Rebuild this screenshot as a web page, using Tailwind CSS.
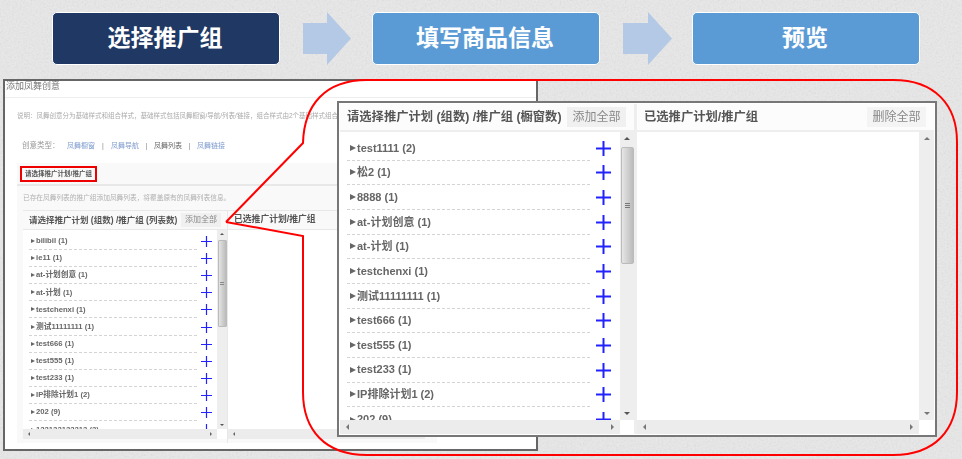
<!DOCTYPE html>
<html lang="zh">
<head>
<meta charset="utf-8">
<script src="https://cdn.jsdelivr.net/npm/@tailwindcss/browser@4"></script>
</head>
<body class="m-0">
<div class="relative w-[962px] h-[459px] overflow-hidden bg-[#e9e9e9] pt-3 font-['Liberation_Sans','Noto_Sans_CJK_SC',sans-serif]">
  <svg class="absolute inset-0 w-full h-full opacity-20" width="962" height="459"><filter id="n"><feTurbulence type="fractalNoise" baseFrequency="0.55" numOctaves="3" seed="4"/><feColorMatrix type="saturate" values="0"/></filter><rect width="962" height="459" filter="url(#n)"/></svg>

  <div class="relative flex items-stretch h-[53px] pl-[52px]">
    <div class="w-[228px] rounded-[5px] border border-white bg-[#1f3864] flex items-center justify-center text-white font-bold text-[23px] pr-[2px]">选择推广组</div>
    <div class="w-[92px] flex items-center pl-[23px]"><svg width="48" height="53" viewBox="0 0 48 53"><path d="M0 11H24V0L48 26.500L24 53V42H0Z" fill="#b4c9e6"/></svg></div>
    <div class="w-[228px] rounded-[5px] border border-white bg-[#5b9bd5] flex items-center justify-center text-white font-bold text-[23px] pr-[2px]">填写商品信息</div>
    <div class="w-[92px] flex items-center pl-[23px]"><svg width="49" height="53" viewBox="0 0 49 53"><path d="M0 11H25V0L49 26.500L25 53V42H0Z" fill="#b4c9e6"/></svg></div>
    <div class="w-[228px] rounded-[5px] border border-white bg-[#5b9bd5] flex items-center justify-center text-white font-bold text-[23px] pr-[2px]">预览</div>
  </div>

  <!-- small screenshot -->
  <div class="relative mt-[14px] ml-[3px] w-[535px] h-[372px] border-2 border-[#666] bg-white flex flex-col overflow-hidden blur-[0.3px]">
    <div class="h-[17px] border-b border-[#eee] pl-px text-[9px] leading-[11px] text-[#777] whitespace-nowrap">添加凤舞创意</div>
    <div class="pl-3 mt-[12px] text-[6.500px] leading-[12px] text-[#aaa] whitespace-nowrap">说明：凤舞创意分为基础样式和组合样式，基础样式包括凤舞橱窗/导航/列表/链接，组合样式由2个基础样式组合而成。</div>
    <div class="pl-[17px] mt-[18px] h-[12px] flex items-center text-[7px] leading-[12px] text-[#7f9ccf] whitespace-nowrap">
      <span class="text-[#999] w-[45px] text-[7.500px]">创意类型：</span><span>凤舞橱窗</span><span class="w-[16px] text-center text-[#888]">|</span><span>凤舞导航</span><span class="w-[15px] text-center text-[#888]">|</span><span class="text-[#666]">凤舞列表</span><span class="w-[15px] text-center text-[#888]">|</span><span>凤舞链接</span>
    </div>
    <div class="mt-[11px] ml-3 w-[420px] flex-1 bg-[#f9f9f9] flex flex-col mb-[6px]">
      <div class="h-[23px] border-b-2 border-[#e8e8e8] flex items-center pl-[3px]">
        <span class="h-[16px] w-[77px] border-2 border-[#e00] flex items-center justify-center text-[6.500px] font-bold text-[#555] whitespace-nowrap">请选择推广计划/推广组</span>
      </div>
      <div class="pl-[6px] mt-[6px] text-[6.700px] leading-[12px] text-[#b0b0b0] whitespace-nowrap">已存在凤舞列表的推广组添加凤舞列表，将覆盖原有的凤舞列表信息。</div>
      <div class="ml-[6px] mt-[6px] w-[402px] flex-1 border-t border-[#e8e8e8] flex">
        <div class="w-[205px] flex flex-col border-r border-[#e8e8e8]">
          <div class="h-[19px] flex items-center border-b border-[#e8e8e8] pl-[6px] pr-[6px] justify-between">
            <span class="text-[8.500px] font-bold text-[#555] whitespace-nowrap">请选择推广计划 (组数) /推广组 (列表数)</span>
            <span class="w-[40px] h-[14px] bg-[#f0f0f0] text-[8px] leading-[14px] text-center text-[#888] whitespace-nowrap shrink-0">添加全部</span>
          </div>
          <div class="h-[209px] flex flex-col bg-white">
            <div class="flex-1 flex min-h-0">
              <div class="flex-1 overflow-hidden pt-[3px] text-[7.700px] font-bold text-[#666]">
                <div class="flex items-center h-[17.100px]"><div class="w-[168px] ml-[6px] h-full border-b border-dashed border-[#d4d4d4] flex items-center gap-[1px] pl-[2px]"><i class="border-y-[2.500px] border-l-[4px] border-y-transparent border-l-[#666]"></i>bilibil (1)</div><svg class="ml-[4px]" width="11" height="11" viewBox="0 0 11 11"><path d="M0 5.500H11M5.500 0V11" stroke="#2222ff" stroke-width="1.200"/></svg></div>
                <div class="flex items-center h-[17.100px]"><div class="w-[168px] ml-[6px] h-full border-b border-dashed border-[#d4d4d4] flex items-center gap-[1px] pl-[2px]"><i class="border-y-[2.500px] border-l-[4px] border-y-transparent border-l-[#666]"></i>ie11 (1)</div><svg class="ml-[4px]" width="11" height="11" viewBox="0 0 11 11"><path d="M0 5.500H11M5.500 0V11" stroke="#2222ff" stroke-width="1.200"/></svg></div>
                <div class="flex items-center h-[17.100px]"><div class="w-[168px] ml-[6px] h-full border-b border-dashed border-[#d4d4d4] flex items-center gap-[1px] pl-[2px]"><i class="border-y-[2.500px] border-l-[4px] border-y-transparent border-l-[#666]"></i>at-计划创意 (1)</div><svg class="ml-[4px]" width="11" height="11" viewBox="0 0 11 11"><path d="M0 5.500H11M5.500 0V11" stroke="#2222ff" stroke-width="1.200"/></svg></div>
                <div class="flex items-center h-[17.100px]"><div class="w-[168px] ml-[6px] h-full border-b border-dashed border-[#d4d4d4] flex items-center gap-[1px] pl-[2px]"><i class="border-y-[2.500px] border-l-[4px] border-y-transparent border-l-[#666]"></i>at-计划 (1)</div><svg class="ml-[4px]" width="11" height="11" viewBox="0 0 11 11"><path d="M0 5.500H11M5.500 0V11" stroke="#2222ff" stroke-width="1.200"/></svg></div>
                <div class="flex items-center h-[17.100px]"><div class="w-[168px] ml-[6px] h-full border-b border-dashed border-[#d4d4d4] flex items-center gap-[1px] pl-[2px]"><i class="border-y-[2.500px] border-l-[4px] border-y-transparent border-l-[#666]"></i>testchenxi (1)</div><svg class="ml-[4px]" width="11" height="11" viewBox="0 0 11 11"><path d="M0 5.500H11M5.500 0V11" stroke="#2222ff" stroke-width="1.200"/></svg></div>
                <div class="flex items-center h-[17.100px]"><div class="w-[168px] ml-[6px] h-full border-b border-dashed border-[#d4d4d4] flex items-center gap-[1px] pl-[2px]"><i class="border-y-[2.500px] border-l-[4px] border-y-transparent border-l-[#666]"></i>测试11111111 (1)</div><svg class="ml-[4px]" width="11" height="11" viewBox="0 0 11 11"><path d="M0 5.500H11M5.500 0V11" stroke="#2222ff" stroke-width="1.200"/></svg></div>
                <div class="flex items-center h-[17.100px]"><div class="w-[168px] ml-[6px] h-full border-b border-dashed border-[#d4d4d4] flex items-center gap-[1px] pl-[2px]"><i class="border-y-[2.500px] border-l-[4px] border-y-transparent border-l-[#666]"></i>test666 (1)</div><svg class="ml-[4px]" width="11" height="11" viewBox="0 0 11 11"><path d="M0 5.500H11M5.500 0V11" stroke="#2222ff" stroke-width="1.200"/></svg></div>
                <div class="flex items-center h-[17.100px]"><div class="w-[168px] ml-[6px] h-full border-b border-dashed border-[#d4d4d4] flex items-center gap-[1px] pl-[2px]"><i class="border-y-[2.500px] border-l-[4px] border-y-transparent border-l-[#666]"></i>test555 (1)</div><svg class="ml-[4px]" width="11" height="11" viewBox="0 0 11 11"><path d="M0 5.500H11M5.500 0V11" stroke="#2222ff" stroke-width="1.200"/></svg></div>
                <div class="flex items-center h-[17.100px]"><div class="w-[168px] ml-[6px] h-full border-b border-dashed border-[#d4d4d4] flex items-center gap-[1px] pl-[2px]"><i class="border-y-[2.500px] border-l-[4px] border-y-transparent border-l-[#666]"></i>test233 (1)</div><svg class="ml-[4px]" width="11" height="11" viewBox="0 0 11 11"><path d="M0 5.500H11M5.500 0V11" stroke="#2222ff" stroke-width="1.200"/></svg></div>
                <div class="flex items-center h-[17.100px]"><div class="w-[168px] ml-[6px] h-full border-b border-dashed border-[#d4d4d4] flex items-center gap-[1px] pl-[2px]"><i class="border-y-[2.500px] border-l-[4px] border-y-transparent border-l-[#666]"></i>IP排除计划1 (2)</div><svg class="ml-[4px]" width="11" height="11" viewBox="0 0 11 11"><path d="M0 5.500H11M5.500 0V11" stroke="#2222ff" stroke-width="1.200"/></svg></div>
                <div class="flex items-center h-[17.100px]"><div class="w-[168px] ml-[6px] h-full border-b border-dashed border-[#d4d4d4] flex items-center gap-[1px] pl-[2px]"><i class="border-y-[2.500px] border-l-[4px] border-y-transparent border-l-[#666]"></i>202 (9)</div><svg class="ml-[4px]" width="11" height="11" viewBox="0 0 11 11"><path d="M0 5.500H11M5.500 0V11" stroke="#2222ff" stroke-width="1.200"/></svg></div>
                <div class="flex items-center h-[17.100px]"><div class="w-[168px] ml-[6px] h-full flex items-center gap-[1px] pl-[2px]"><i class="border-y-[2.500px] border-l-[4px] border-y-transparent border-l-[#666]"></i>123123123213 (2)</div><svg class="ml-[4px]" width="11" height="11" viewBox="0 0 11 11"><path d="M0 5.500H11M5.500 0V11" stroke="#2222ff" stroke-width="1.200"/></svg></div>
              </div>
              <div class="w-[10px] bg-[#eee] flex flex-col items-center relative">
                <i class="mt-[3px] border-x-[2px] border-b-[2px] border-x-transparent border-b-[#555]"></i>
                <div class="mt-[5px] w-[9px] h-[87px] bg-linear-to-r from-[#e4e4e4] to-[#bbb] border border-[#bbb] rounded-[1px] flex flex-col items-center justify-center gap-px"><i class="w-[4px] h-px bg-[#888]"></i><i class="w-[4px] h-px bg-[#888]"></i></div>
                <i class="mt-auto mb-[3px] border-x-[2px] border-t-[2px] border-x-transparent border-t-[#555]"></i>
              </div>
            </div>
            <div class="h-[10px] flex">
              <div class="flex-1 bg-[#ececec] flex items-center justify-between px-[5px]"><i class="border-y-[2px] border-r-[2px] border-y-transparent border-r-[#666]"></i><i class="border-y-[2px] border-l-[2px] border-y-transparent border-l-[#666]"></i></div>
              <div class="w-[10px]"></div>
            </div>
          </div>
        </div>
        <div class="flex-1 flex flex-col">
          <div class="h-[19px] border-b border-[#e8e8e8] pl-[6px] flex items-center text-[8.800px] font-bold text-[#555] whitespace-nowrap">已选推广计划/推广组</div>
          <div class="h-[199px] bg-white"></div>
          <div class="h-[10px] bg-[#ececec] flex items-center pl-[5px]"><i class="border-y-[2px] border-r-[2px] border-y-transparent border-r-[#666]"></i></div>
        </div>
      </div>
    </div>
  </div>

  <!-- enlarged callout -->
  <div class="absolute left-[337px] top-[101px] w-[600px] h-[336px] border-2 border-[#777] bg-white flex p-px blur-[0.3px]">
    <div class="w-[297px] shrink-0 flex flex-col border-r-[3px] border-[#eee]">
      <div class="h-[28px] shrink-0 bg-[#fcfcfc] border-b-2 border-[#eee] flex items-center justify-between pl-[7px] pr-[8px]">
        <span class="text-[12.300px] font-bold text-[#555] whitespace-nowrap">请选择推广计划 (组数) /推广组 (橱窗数)</span>
        <span class="w-[59px] h-[20px] shrink-0 bg-[#f0f0f0] text-[12px] leading-[20px] text-center text-[#888] whitespace-nowrap">添加全部</span>
      </div>
      <div class="flex-1 flex min-h-0">
        <div class="flex-1 overflow-hidden pt-[4px] text-[11px] font-bold text-[#666]">
          <div class="flex items-center h-[24.670px]"><div class="w-[243px] ml-[7px] h-full border-b border-dashed border-[#d4d4d4] flex items-center gap-[1px] pl-[3px]"><i class="border-y-[3.500px] border-l-[6px] border-y-transparent border-l-[#666]"></i>test1111 (2)</div><svg class="ml-[6px]" width="15" height="15" viewBox="0 0 15 15"><path d="M0 7.500H15M7.500 0V15" stroke="#2222ff" stroke-width="2"/></svg></div>
          <div class="flex items-center h-[24.670px]"><div class="w-[243px] ml-[7px] h-full border-b border-dashed border-[#d4d4d4] flex items-center gap-[1px] pl-[3px]"><i class="border-y-[3.500px] border-l-[6px] border-y-transparent border-l-[#666]"></i>松2 (1)</div><svg class="ml-[6px]" width="15" height="15" viewBox="0 0 15 15"><path d="M0 7.500H15M7.500 0V15" stroke="#2222ff" stroke-width="2"/></svg></div>
          <div class="flex items-center h-[24.670px]"><div class="w-[243px] ml-[7px] h-full border-b border-dashed border-[#d4d4d4] flex items-center gap-[1px] pl-[3px]"><i class="border-y-[3.500px] border-l-[6px] border-y-transparent border-l-[#666]"></i>8888 (1)</div><svg class="ml-[6px]" width="15" height="15" viewBox="0 0 15 15"><path d="M0 7.500H15M7.500 0V15" stroke="#2222ff" stroke-width="2"/></svg></div>
          <div class="flex items-center h-[24.670px]"><div class="w-[243px] ml-[7px] h-full border-b border-dashed border-[#d4d4d4] flex items-center gap-[1px] pl-[3px]"><i class="border-y-[3.500px] border-l-[6px] border-y-transparent border-l-[#666]"></i>at-计划创意 (1)</div><svg class="ml-[6px]" width="15" height="15" viewBox="0 0 15 15"><path d="M0 7.500H15M7.500 0V15" stroke="#2222ff" stroke-width="2"/></svg></div>
          <div class="flex items-center h-[24.670px]"><div class="w-[243px] ml-[7px] h-full border-b border-dashed border-[#d4d4d4] flex items-center gap-[1px] pl-[3px]"><i class="border-y-[3.500px] border-l-[6px] border-y-transparent border-l-[#666]"></i>at-计划 (1)</div><svg class="ml-[6px]" width="15" height="15" viewBox="0 0 15 15"><path d="M0 7.500H15M7.500 0V15" stroke="#2222ff" stroke-width="2"/></svg></div>
          <div class="flex items-center h-[24.670px]"><div class="w-[243px] ml-[7px] h-full border-b border-dashed border-[#d4d4d4] flex items-center gap-[1px] pl-[3px]"><i class="border-y-[3.500px] border-l-[6px] border-y-transparent border-l-[#666]"></i>testchenxi (1)</div><svg class="ml-[6px]" width="15" height="15" viewBox="0 0 15 15"><path d="M0 7.500H15M7.500 0V15" stroke="#2222ff" stroke-width="2"/></svg></div>
          <div class="flex items-center h-[24.670px]"><div class="w-[243px] ml-[7px] h-full border-b border-dashed border-[#d4d4d4] flex items-center gap-[1px] pl-[3px]"><i class="border-y-[3.500px] border-l-[6px] border-y-transparent border-l-[#666]"></i>测试11111111 (1)</div><svg class="ml-[6px]" width="15" height="15" viewBox="0 0 15 15"><path d="M0 7.500H15M7.500 0V15" stroke="#2222ff" stroke-width="2"/></svg></div>
          <div class="flex items-center h-[24.670px]"><div class="w-[243px] ml-[7px] h-full border-b border-dashed border-[#d4d4d4] flex items-center gap-[1px] pl-[3px]"><i class="border-y-[3.500px] border-l-[6px] border-y-transparent border-l-[#666]"></i>test666 (1)</div><svg class="ml-[6px]" width="15" height="15" viewBox="0 0 15 15"><path d="M0 7.500H15M7.500 0V15" stroke="#2222ff" stroke-width="2"/></svg></div>
          <div class="flex items-center h-[24.670px]"><div class="w-[243px] ml-[7px] h-full border-b border-dashed border-[#d4d4d4] flex items-center gap-[1px] pl-[3px]"><i class="border-y-[3.500px] border-l-[6px] border-y-transparent border-l-[#666]"></i>test555 (1)</div><svg class="ml-[6px]" width="15" height="15" viewBox="0 0 15 15"><path d="M0 7.500H15M7.500 0V15" stroke="#2222ff" stroke-width="2"/></svg></div>
          <div class="flex items-center h-[24.670px]"><div class="w-[243px] ml-[7px] h-full border-b border-dashed border-[#d4d4d4] flex items-center gap-[1px] pl-[3px]"><i class="border-y-[3.500px] border-l-[6px] border-y-transparent border-l-[#666]"></i>test233 (1)</div><svg class="ml-[6px]" width="15" height="15" viewBox="0 0 15 15"><path d="M0 7.500H15M7.500 0V15" stroke="#2222ff" stroke-width="2"/></svg></div>
          <div class="flex items-center h-[24.670px]"><div class="w-[243px] ml-[7px] h-full border-b border-dashed border-[#d4d4d4] flex items-center gap-[1px] pl-[3px]"><i class="border-y-[3.500px] border-l-[6px] border-y-transparent border-l-[#666]"></i>IP排除计划1 (2)</div><svg class="ml-[6px]" width="15" height="15" viewBox="0 0 15 15"><path d="M0 7.500H15M7.500 0V15" stroke="#2222ff" stroke-width="2"/></svg></div>
          <div class="flex items-center h-[24.670px]"><div class="w-[243px] ml-[7px] h-full flex items-center gap-[1px] pl-[3px]"><i class="border-y-[3.500px] border-l-[6px] border-y-transparent border-l-[#666]"></i>202 (9)</div><svg class="ml-[6px]" width="15" height="15" viewBox="0 0 15 15"><path d="M0 7.500H15M7.500 0V15" stroke="#2222ff" stroke-width="2"/></svg></div>
        </div>
        <div class="w-[14px] shrink-0 flex flex-col">
          <div class="flex-1 bg-[#eee] flex flex-col items-center relative">
            <i class="mt-[5px] border-x-[3px] border-b-[3px] border-x-transparent border-b-[#555]"></i>
            <div class="mt-[7px] w-[13px] h-[117px] bg-linear-to-r from-[#e6e6e6] to-[#bbb] border border-[#bbb] rounded-[2px] flex flex-col items-center justify-center gap-px">
              <i class="w-[5px] h-px bg-[#777]"></i><i class="w-[5px] h-px bg-[#777]"></i><i class="w-[5px] h-px bg-[#777]"></i>
            </div>
            <i class="mt-auto mb-[5px] border-x-[3px] border-t-[3px] border-x-transparent border-t-[#555]"></i>
          </div>
          <div class="h-[14px] bg-white"></div>
        </div>
      </div>
      <div class="h-0 relative"><div class="absolute left-0 bottom-0 w-[280px] h-[14px] bg-[#ececec] flex items-center justify-between px-[6px]"><i class="border-y-[3px] border-r-[3px] border-y-transparent border-r-[#777]"></i><i class="border-y-[3px] border-l-[3px] border-y-transparent border-l-[#777]"></i></div></div>
    </div>
    <div class="flex-1 flex flex-col">
      <div class="h-[28px] shrink-0 bg-[#fcfcfc] border-b-2 border-[#eee] flex items-center justify-between pl-[7px] pr-[8px]">
        <span class="text-[12.300px] font-bold text-[#555] whitespace-nowrap">已选推广计划/推广组</span>
        <span class="w-[59px] h-[20px] shrink-0 bg-[#f4f4f4] text-[12px] leading-[20px] text-center text-[#888] whitespace-nowrap">删除全部</span>
      </div>
      <div class="flex-1 flex min-h-0">
        <div class="flex-1 bg-white"></div>
        <div class="w-[15px] bg-[#eee] flex flex-col items-center">
          <i class="mt-[5px] border-x-[3px] border-b-[3px] border-x-transparent border-b-[#777]"></i>
          <i class="mt-auto mb-[5px] border-x-[3px] border-t-[3px] border-x-transparent border-t-[#777]"></i>
        </div>
      </div>
      <div class="h-[14px] shrink-0 flex">
        <div class="flex-1 bg-[#ececec] flex items-center justify-between px-[6px]"><i class="border-y-[3px] border-r-[3px] border-y-transparent border-r-[#777]"></i><i class="border-y-[3px] border-l-[3px] border-y-transparent border-l-[#777]"></i></div>
        <div class="w-[15px] bg-white"></div>
      </div>
    </div>
  </div>

  <!-- red callout outline -->
  <svg class="absolute inset-0 pointer-events-none" width="962" height="459" fill="none"><path d="M226 222L303 143C304 105 325 80 367 80H893C935 80 957 105 957 142V392C957 430 935 455 893 455H367C325 455 303 430 303 392V236L226 222" stroke="#ff0000" stroke-width="2"/></svg>
</div>
</body>
</html>
